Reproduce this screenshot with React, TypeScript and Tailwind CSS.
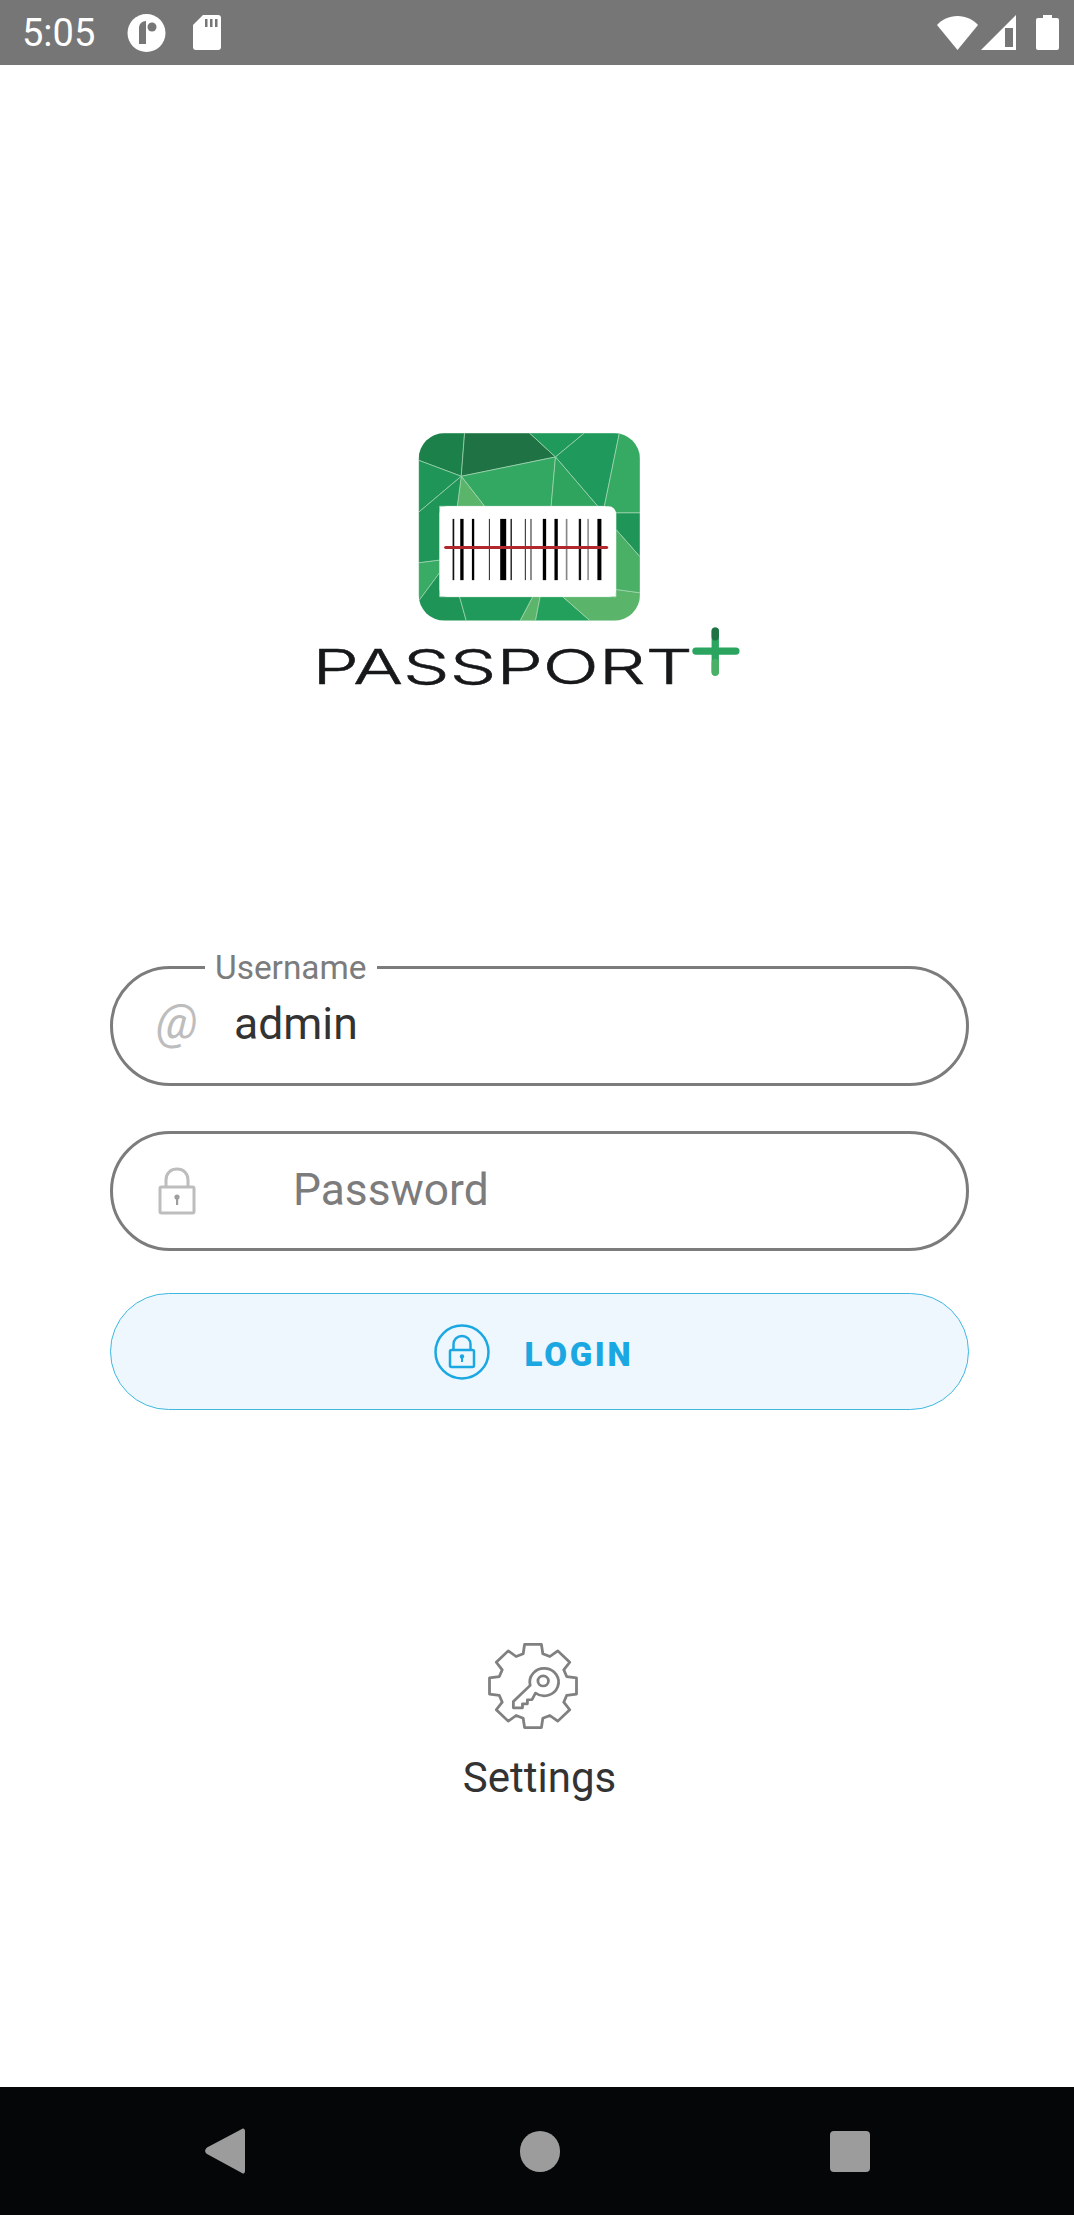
import React from "react";

const roboto = "font-['Roboto',sans-serif]";

const tiles: [string, string][] = [
  ["357,40 495,40 485,170 357,122", "#1b8049"],
  ["495,40 690,40 768,112 485,170", "#1e7243"],
  ["690,40 855,40 768,112", "#1f9a5a"],
  ["855,40 960,40 915,260 895,260 768,112", "#1f9a5c"],
  ["960,40 1022,40 1022,280 950,280 915,260", "#36aa62"],
  ["485,170 768,112 755,260 555,260", "#33a862"],
  ["768,112 895,260 755,260", "#2fa45f"],
  ["485,170 555,260 473,260", "#5ab56a"],
  ["357,122 485,170 357,278", "#1f9558"],
  ["357,278 485,170 473,260 420,260 420,422 357,430", "#1f9558"],
  ["357,430 420,422 420,460 357,545", "#3aab64"],
  ["357,545 420,460 420,532 480,532 500,604 357,604", "#1e9557"],
  ["480,532 700,532 662,604 500,604", "#209a5b"],
  ["700,532 722,532 708,604 662,604", "#5cb56b"],
  ["722,532 790,532 872,604 708,604", "#24a05d"],
  ["790,532 950,532 950,510 1022,520 1022,604 872,604", "#5ab56a"],
  ["950,280 1022,280 1022,412 950,330", "#1f9558"],
  ["950,330 1022,412 1022,520 950,510", "#49b066"],
];

const bars: [number, number, string][] = [
  [459, 5, "#111"], [482, 10, "#000"], [517, 7, "#000"], [568, 3, "#222"], [602, 18, "#000"],
  [633, 4, "#111"], [676, 3, "#222"], [693, 3, "#222"], [730, 10, "#000"], [765, 10, "#000"],
  [799, 5, "#888"], [838, 7, "#111"], [864, 4, "#777"], [894, 12, "#000"],
];

const Logo = () => (
  <svg width="437" height="253" viewBox="20 40 1310 760" className="ml-[-25px] overflow-visible">
    <defs>
      <clipPath id="tile">
        <rect x="357" y="40" width="665" height="564" rx="78" />
      </clipPath>
    </defs>
    <g clipPath="url(#tile)">
      {tiles.map(([points, fill]) => (
        <polygon key={points} points={points} fill={fill} stroke="#a9d8b6" strokeWidth="2" />
      ))}
    </g>
    <rect x="420" y="260" width="530" height="272" rx="22" fill="#fff" />
    {bars.map(([x, w, fill]) => (
      <rect key={x} x={x} y="298" width={w} height="184" fill={fill} />
    ))}
    <line x1="438" y1="384" x2="922" y2="384" stroke="#b0272d" strokeWidth="9" strokeLinecap="round" />
    <text
      x="38"
      y="793"
      textLength="1142"
      lengthAdjust="spacingAndGlyphs"
      fontFamily="Inter, sans-serif"
      fontWeight="300"
      fontSize="142"
      fill="#17181a"
      stroke="#17181a"
      strokeWidth="1.5"
    >
      PASSPORT
    </text>
    <line x1="1190" y1="695" x2="1310" y2="695" stroke="#2aa45f" strokeWidth="22" strokeLinecap="round" />
    <line x1="1248" y1="635" x2="1248" y2="758" stroke="#2aa45f" strokeWidth="22" strokeLinecap="round" />
    <line x1="1248" y1="635" x2="1248" y2="652" stroke="#1e7243" strokeWidth="22" strokeLinecap="round" />
    <line x1="1248" y1="730" x2="1248" y2="758" stroke="#49b066" strokeWidth="22" strokeLinecap="round" />
  </svg>
);

const LockIcon = () => (
  <svg width="38" height="48" viewBox="0 0 38 48" fill="none" stroke="#bdbdbd" strokeWidth="3">
    <path d="M8 20V13C8 6 13 2 19 2s11 4 11 11v7" />
    <rect x="2" y="20" width="34" height="26" rx="1.5" />
    <circle cx="19" cy="30" r="2.6" fill="#9e9e9e" stroke="none" />
    <rect x="18" y="31" width="2.2" height="7" fill="#9e9e9e" stroke="none" />
  </svg>
);

const LoginIcon = () => (
  <svg width="56" height="56" viewBox="0 0 56 56" fill="none" stroke="#1ba8e2" strokeWidth="2.5">
    <circle cx="28" cy="28" r="26.5" />
    <path d="M19.5 26v-5.500c0-5 3.600-8.500 8.500-8.500s8.500 3.500 8.500 8.500V26" />
    <rect x="16" y="26" width="24" height="17" rx="1.5" />
    <circle cx="28" cy="32.5" r="2.2" fill="#1ba8e2" stroke="none" />
    <rect x="27" y="33" width="2" height="5" fill="#1ba8e2" stroke="none" />
  </svg>
);

// eight toothed gear, coords are in the 3x zoom scale
const gearPath = (() => {
  const cx = 134;
  const cy = 128;
  const pts: string[] = [];
  for (let i = 0; i < 8; i++) {
    const a = (i * Math.PI) / 4 - Math.PI / 2;
    const at = (r: number, d: number) => {
      const x = cx + r * Math.cos(a) - d * Math.sin(a);
      const y = cy + r * Math.sin(a) + d * Math.cos(a);
      return `${x.toFixed(1)},${y.toFixed(1)}`;
    };
    pts.push(at(96, -28), at(124, -24), at(124, 24), at(96, 28));
  }
  return "M" + pts.join("L") + "Z";
})();

const GearKeyIcon = () => (
  <svg width="94" height="86" viewBox="0 0 268 256" preserveAspectRatio="none" fill="none" stroke="#808080" strokeWidth="8" strokeLinejoin="round">
    <path d={gearPath} />
    <g transform="translate(-144,-69)">
      <path d="M285 218 A41 41 0 1 0 270 195 L222 243 L222 262 L248 262 L248 250 L262 250 L262 238 L275 238 Z" />
      <circle cx="307" cy="182" r="15" />
    </g>
  </svg>
);

const StatusBar = () => (
  <div className="flex h-[65px] items-center bg-[#767677] pl-[22px] pr-[15px]">
    <span className={`${roboto} w-[105px] text-[38px] leading-none text-white`}>5:05</span>
    <svg width="39" height="38" viewBox="0 0 39 38">
      <circle cx="19.5" cy="19" r="19" fill="#fff" />
      <path d="M12 30V14c0-4 3-7 7-7v23z" fill="#767677" />
      <circle cx="25" cy="13" r="4.5" fill="#767677" />
    </svg>
    <svg width="28" height="35" viewBox="0 0 28 35" className="ml-[27px]">
      <path d="M10 0h15a3 3 0 0 1 3 3v29a3 3 0 0 1-3 3H3a3 3 0 0 1-3-3V10z" fill="#fff" />
      <path d="M12 4h2.500v8H12zM17 4h2.500v8H17zM22 4h2.500v8H22z" fill="#767677" />
    </svg>
    <div className="ml-auto flex items-center">
      <svg width="41" height="34" viewBox="0 0 41 34">
        <path d="M20.500 34L0 9C5 3.500 12 0 20.500 0S36 3.500 41 9z" fill="#fff" />
      </svg>
      <svg width="35" height="35" viewBox="0 0 35 35" className="ml-[3px]">
        <path d="M35 0V35H0z" fill="#fff" />
        <path d="M24 13H32V32H24z" fill="#767677" />
      </svg>
      <svg width="23" height="35" viewBox="0 0 23 35" className="ml-[20px]">
        <path d="M7 0h9v3h5a2 2 0 0 1 2 2v28a2 2 0 0 1-2 2H2a2 2 0 0 1-2-2V5a2 2 0 0 1 2-2h5z" fill="#fff" />
      </svg>
    </div>
  </div>
);

const NavBar = () => (
  <div className="flex h-[128px] items-center bg-[#040607] pl-[205px]">
    <svg width="40" height="46" viewBox="0 0 40 46">
      <path d="M36 1.500C38 -.5 40 .5 40 3V43c0 2.500-2 3.500-4 1.500L2 26c-2.500-2-2.500-4 0-6.500z" fill="#9c9c9c" />
    </svg>
    <div className="ml-[275px] h-[41px] w-[40px] rounded-full bg-[#9c9c9c]" />
    <div className="ml-[270px] h-[41px] w-[40px] rounded-[4px] bg-[#9c9c9c]" />
  </div>
);

export default function App() {
  return (
    <div className={`${roboto} flex min-h-[2215px] flex-col bg-white`}>
      <StatusBar />
      <div className="flex flex-1 flex-col items-center pt-[368px]">
        <Logo />

        <div className="ml-[5px] mt-[280px] flex w-[859px] flex-col">
          <div className="relative flex h-[120px] items-center rounded-full border-[3px] border-[#7c7c7c] pl-[43px]">
            <span className="absolute left-[92px] top-[-20px] bg-white px-[10px] text-[33.4px] leading-[38px] text-[#7c7c7c]">
              Username
            </span>
            <span className="w-[78px] pb-[8px] text-[48px] italic leading-none text-[#bdbdbd]">@</span>
            <span className="pb-[3px] text-[44.5px] leading-none text-[#333333]">admin</span>
          </div>

          <div className="mt-[45px] flex h-[120px] items-center rounded-full border-[3px] border-[#7c7c7c] pl-[45px]">
            <LockIcon />
            <span className="ml-[97px] pb-[2px] text-[44.3px] leading-none text-[#7c7c7c]">Password</span>
          </div>

          <div className="mt-[42px] flex h-[117px] items-center justify-center gap-[35px] rounded-full border border-[#3fb8e0] bg-[#edf7fd] pr-[12px]">
            <LoginIcon />
            <span className="pt-[5px] text-[33px] font-black leading-none tracking-[2.7px] text-[#1ba8e2]">LOGIN</span>
          </div>
        </div>

        <div className="ml-[5px] mt-[233px] flex flex-col items-center">
          <div className="mr-[12px] flex">
            <GearKeyIcon />
          </div>
          <span className="mt-[28px] text-[42px] leading-none text-[#333333]">Settings</span>
        </div>
      </div>
      <NavBar />
    </div>
  );
}
